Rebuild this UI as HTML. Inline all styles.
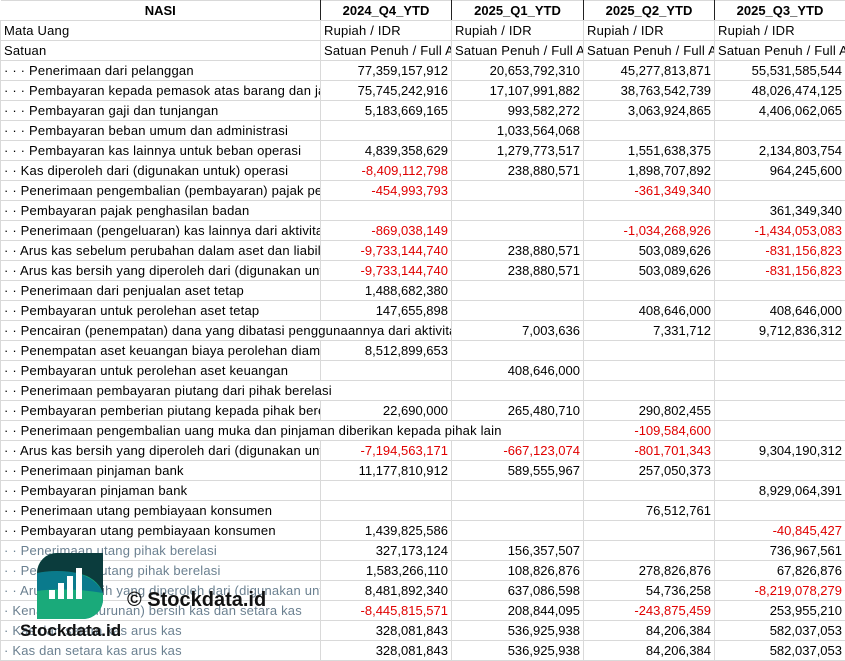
<!DOCTYPE html>
<html><head><meta charset="utf-8"><style>
body{margin:0;width:845px;height:661px;overflow:hidden;background:#fff;font-family:"Liberation Sans",sans-serif;font-size:13px;color:#000;position:relative}
table{border-collapse:collapse;table-layout:fixed;position:absolute;left:0;top:0;width:845px}
td{height:19px;padding:0 3px;border:1px solid #d9d9d9;white-space:nowrap;overflow:hidden;line-height:19px;text-overflow:clip}
td.n{text-align:right}
td.t{letter-spacing:0.2px}
.r{color:#e00000}
tr.h td{font-weight:bold;text-align:center;border-left:1px solid #222;border-right:1px solid #222}
tr.h td:first-child{border-left:none}
.g{color:#6b8090}
</style></head><body>
<table>
<colgroup><col style="width:320px"><col style="width:131px"><col style="width:132px"><col style="width:131px"><col style="width:131px"></colgroup>
<tr class="h"><td>NASI</td><td>2024_Q4_YTD</td><td>2025_Q1_YTD</td><td>2025_Q2_YTD</td><td>2025_Q3_YTD</td></tr>
<tr><td class="t">Mata Uang</td><td class="t">Rupiah / IDR</td><td class="t">Rupiah / IDR</td><td class="t">Rupiah / IDR</td><td class="t">Rupiah / IDR</td></tr>
<tr><td class="t">Satuan</td><td class="t">Satuan Penuh / Full Amount</td><td class="t">Satuan Penuh / Full Amount</td><td class="t">Satuan Penuh / Full Amount</td><td class="t">Satuan Penuh / Full Amount</td></tr>
<tr><td class="t">· · · Penerimaan dari pelanggan</td><td class="n">77,359,157,912</td><td class="n">20,653,792,310</td><td class="n">45,277,813,871</td><td class="n">55,531,585,544</td></tr>
<tr><td class="t">· · · Pembayaran kepada pemasok atas barang dan jasa</td><td class="n">75,745,242,916</td><td class="n">17,107,991,882</td><td class="n">38,763,542,739</td><td class="n">48,026,474,125</td></tr>
<tr><td class="t">· · · Pembayaran gaji dan tunjangan</td><td class="n">5,183,669,165</td><td class="n">993,582,272</td><td class="n">3,063,924,865</td><td class="n">4,406,062,065</td></tr>
<tr><td class="t">· · · Pembayaran beban umum dan administrasi</td><td></td><td class="n">1,033,564,068</td><td></td><td></td></tr>
<tr><td class="t">· · · Pembayaran kas lainnya untuk beban operasi</td><td class="n">4,839,358,629</td><td class="n">1,279,773,517</td><td class="n">1,551,638,375</td><td class="n">2,134,803,754</td></tr>
<tr><td class="t">· · Kas diperoleh dari (digunakan untuk) operasi</td><td class="n r">-8,409,112,798</td><td class="n">238,880,571</td><td class="n">1,898,707,892</td><td class="n">964,245,600</td></tr>
<tr><td class="t">· · Penerimaan pengembalian (pembayaran) pajak penghasilan</td><td class="n r">-454,993,793</td><td></td><td class="n r">-361,349,340</td><td></td></tr>
<tr><td class="t">· · Pembayaran pajak penghasilan badan</td><td></td><td></td><td></td><td class="n">361,349,340</td></tr>
<tr><td class="t">· · Penerimaan (pengeluaran) kas lainnya dari aktivitas</td><td class="n r">-869,038,149</td><td></td><td class="n r">-1,034,268,926</td><td class="n r">-1,434,053,083</td></tr>
<tr><td class="t">· · Arus kas sebelum perubahan dalam aset dan liabilitas</td><td class="n r">-9,733,144,740</td><td class="n">238,880,571</td><td class="n">503,089,626</td><td class="n r">-831,156,823</td></tr>
<tr><td class="t">· · Arus kas bersih yang diperoleh dari (digunakan untuk)</td><td class="n r">-9,733,144,740</td><td class="n">238,880,571</td><td class="n">503,089,626</td><td class="n r">-831,156,823</td></tr>
<tr><td class="t">· · Penerimaan dari penjualan aset tetap</td><td class="n">1,488,682,380</td><td></td><td></td><td></td></tr>
<tr><td class="t">· · Pembayaran untuk perolehan aset tetap</td><td class="n">147,655,898</td><td></td><td class="n">408,646,000</td><td class="n">408,646,000</td></tr>
<tr><td class="t" colspan="2">· · Pencairan (penempatan) dana yang dibatasi penggunaannya dari aktivitas</td><td class="n">7,003,636</td><td class="n">7,331,712</td><td class="n">9,712,836,312</td></tr>
<tr><td class="t">· · Penempatan aset keuangan biaya perolehan diamortisasi</td><td class="n">8,512,899,653</td><td></td><td></td><td></td></tr>
<tr><td class="t">· · Pembayaran untuk perolehan aset keuangan</td><td></td><td class="n">408,646,000</td><td></td><td></td></tr>
<tr><td class="t" colspan="2">· · Penerimaan pembayaran piutang dari pihak berelasi</td><td></td><td></td><td></td></tr>
<tr><td class="t">· · Pembayaran pemberian piutang kepada pihak berelasi</td><td class="n">22,690,000</td><td class="n">265,480,710</td><td class="n">290,802,455</td><td></td></tr>
<tr><td class="t" colspan="3">· · Penerimaan pengembalian uang muka dan pinjaman diberikan kepada pihak lain</td><td class="n r">-109,584,600</td><td></td></tr>
<tr><td class="t">· · Arus kas bersih yang diperoleh dari (digunakan untuk)</td><td class="n r">-7,194,563,171</td><td class="n r">-667,123,074</td><td class="n r">-801,701,343</td><td class="n">9,304,190,312</td></tr>
<tr><td class="t">· · Penerimaan pinjaman bank</td><td class="n">11,177,810,912</td><td class="n">589,555,967</td><td class="n">257,050,373</td><td></td></tr>
<tr><td class="t">· · Pembayaran pinjaman bank</td><td></td><td></td><td></td><td class="n">8,929,064,391</td></tr>
<tr><td class="t">· · Penerimaan utang pembiayaan konsumen</td><td></td><td></td><td class="n">76,512,761</td><td></td></tr>
<tr><td class="t">· · Pembayaran utang pembiayaan konsumen</td><td class="n">1,439,825,586</td><td></td><td></td><td class="n r">-40,845,427</td></tr>
<tr><td class="t g">· · Penerimaan utang pihak berelasi</td><td class="n">327,173,124</td><td class="n">156,357,507</td><td></td><td class="n">736,967,561</td></tr>
<tr><td class="t g">· · Pembayaran utang pihak berelasi</td><td class="n">1,583,266,110</td><td class="n">108,826,876</td><td class="n">278,826,876</td><td class="n">67,826,876</td></tr>
<tr><td class="t g">· · Arus kas bersih yang diperoleh dari (digunakan untuk)</td><td class="n">8,481,892,340</td><td class="n">637,086,598</td><td class="n">54,736,258</td><td class="n r">-8,219,078,279</td></tr>
<tr><td class="t g">· Kenaikan (penurunan) bersih kas dan setara kas</td><td class="n r">-8,445,815,571</td><td class="n">208,844,095</td><td class="n r">-243,875,459</td><td class="n">253,955,210</td></tr>
<tr><td class="t g">· Kas dan setara kas arus kas</td><td class="n">328,081,843</td><td class="n">536,925,938</td><td class="n">84,206,384</td><td class="n">582,037,053</td></tr>
<tr><td class="t g">· Kas dan setara kas arus kas</td><td class="n">328,081,843</td><td class="n">536,925,938</td><td class="n">84,206,384</td><td class="n">582,037,053</td></tr>
</table>
<svg style="position:absolute;left:37px;top:553px" width="66" height="66" viewBox="0 0 66 66">
<defs><clipPath id="c"><path d="M20 0H66V46A20 20 0 0 1 46 66H0V20A20 20 0 0 1 20 0Z"/></clipPath></defs>
<g clip-path="url(#c)">
<rect width="66" height="66" fill="#1aaa7a"/>
<path d="M0 20Q20 16 40 20Q60 26 66 40V66H0Z" fill="#0a7a8c"/>
<path d="M0 38Q30 34 66 40V66H0Z" fill="#1aaa7a"/>
<path d="M0 0H66V40Q60 24 40 20Q20 16 0 20Z" fill="#0b3c3d"/>
</g>
<rect x="12" y="37" width="6" height="9" fill="#fff"/>
<rect x="21" y="30" width="6" height="16" fill="#fff"/>
<rect x="30" y="23" width="6" height="23" fill="#fff"/>
<rect x="39" y="15" width="6" height="31" fill="#fff"/>
</svg>
<div style="position:absolute;left:127px;top:589px;font-size:20px;font-weight:bold;color:#111">© Stockdata.id</div>
<div style="position:absolute;left:20px;top:621px;font-size:17px;font-weight:bold;color:#111">Stockdata.id</div>
</body></html>
